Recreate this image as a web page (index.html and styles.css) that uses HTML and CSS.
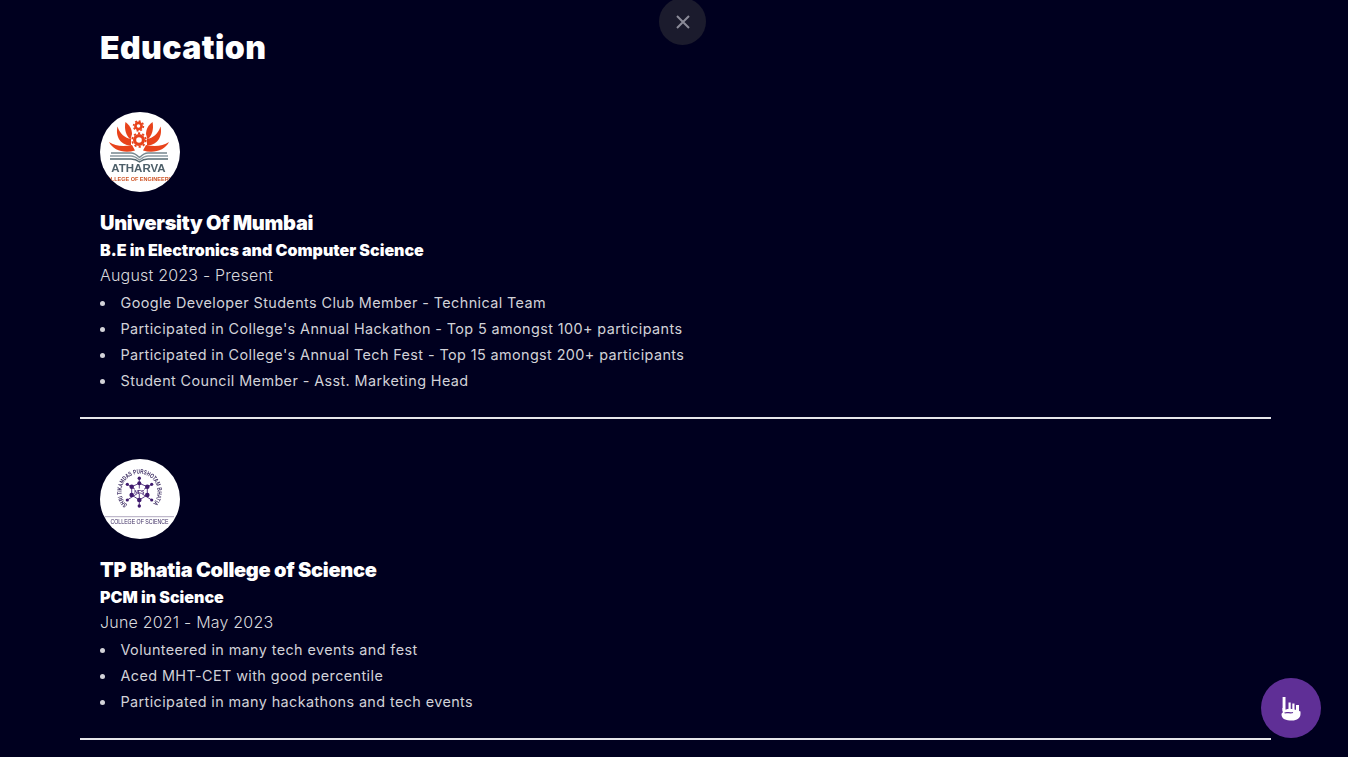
FILE: index.html
```html
<!DOCTYPE html>
<html lang="en">
<head>
<meta charset="utf-8">
<title>Education</title>
<link rel="stylesheet" href="styles.css">
</head>
<body>
<button class="close" aria-label="Close">
  <svg width="16" height="16" viewBox="0 0 16 16"><path d="M2 2L14 14M14 2L2 14" stroke="#8b8b98" stroke-width="2" fill="none"/></svg>
</button>
<main class="page">
  <h1 class="title">Education</h1>
  <section class="entry">
    <div class="logo">
      <svg width="80" height="80" viewBox="0 0 80 80">
        <g fill="#e8431b">
          <path d="M32 33C23 35 15 34 9 30C13 38 24 42 35 38.500Z"/>
          <path d="M46 33C55 35 63 34 69 30C65 38 54 42 43 38.500Z"/>
          <path d="M31 27C25 26 20 22 17.500 14.500C15.500 23 19 33 31 33.500Z"/>
          <path d="M47 27C53 26 58 22 60.500 14.500C62.500 23 59 33 47 33.500Z"/>
          <path d="M32 22C32 17 29.500 13 25.500 10C24 17 26 24 30.500 27.500Z"/>
          <path d="M46 22C46 17 48.500 13 52.500 10C54 17 52 24 47.500 27.500Z"/>
        </g>
        <g fill="none" stroke="#e8431b">
          <circle cx="38.500" cy="14" r="3.100" stroke-width="2.600"/>
          <circle cx="38.500" cy="14" r="4.900" stroke-width="1.600" stroke-dasharray="1.900 1.900"/>
          <circle cx="39" cy="28" r="4.400" stroke-width="3.200"/>
          <circle cx="39" cy="28" r="6.800" stroke-width="1.800" stroke-dasharray="2.200 2.200"/>
        </g>
        <g fill="none" stroke="#75878f" stroke-width="1.300">
          <path d="M11 41H31C35 41 37 43 39.500 45.500C42 43 44 41 48 41H67"/>
          <path d="M10 44H31C35 44 37 46 39.500 48C42 46 44 44 48 44H68" stroke="#8c9ba2"/>
          <path d="M10 47H31C35 47 37 48 39.500 50C42 48 44 47 48 47H68" stroke="#566a72"/>
        </g>
        <text class="logo-a" x="38.500" y="60" text-anchor="middle">ATHARVA</text>
        <text class="logo-b" x="40.500" y="68.800" text-anchor="middle">COLLEGE OF ENGINEERING</text>
      </svg>
    </div>
    <h2 class="school">University Of Mumbai</h2>
    <h3 class="degree">B.E in Electronics and Computer Science</h3>
    <p class="dates">August 2023 - Present</p>
    <ul class="points">
      <li>Google Developer Students Club Member - Technical Team</li>
      <li>Participated in College's Annual Hackathon - Top 5 amongst 100+ participants</li>
      <li>Participated in College's Annual Tech Fest - Top 15 amongst 200+ participants</li>
      <li>Student Council Member - Asst. Marketing Head</li>
    </ul>
  </section>
  <section class="entry">
    <div class="logo">
      <svg width="80" height="80" viewBox="0 0 80 80">
        <defs><path id="arc" d="M27.400 46A18 18 0 1 1 51.600 46"/></defs>
        <text class="logo-c"><textPath href="#arc" textLength="84" lengthAdjust="spacingAndGlyphs">SHRI TIKAMDAS PURSHOTAM BHATIA</textPath></text>
        <g stroke="#4c2a78" stroke-width=".9" fill="none">
          <path d="M39.300 19V47M27.300 25.300L51.700 41M51.700 25.300L27.300 41"/>
          <path d="M39.300 24.300L47.300 27.700V36L39.300 41L31.700 36V27.700Z"/>
        </g>
        <g fill="#3f1a6e">
          <circle cx="39.300" cy="19.300" r="1.700"/><circle cx="39.300" cy="24.300" r="2"/><circle cx="39.300" cy="41" r="2.300"/><circle cx="39.300" cy="47" r="1.700"/>
          <circle cx="31.700" cy="27.700" r="2.300"/><circle cx="47.300" cy="27.700" r="2.300"/><circle cx="31.700" cy="36" r="2.300"/><circle cx="47.300" cy="36" r="2.300"/>
          <circle cx="27.300" cy="25.300" r="1.600"/><circle cx="51.700" cy="25.300" r="1.600"/><circle cx="27.300" cy="41" r="1.600"/><circle cx="51.700" cy="41" r="1.600"/>
        </g>
        <rect x="35" y="29.500" width="9" height="5.500" fill="#fff"/>
        <text class="logo-d" x="39.300" y="34.500" text-anchor="middle">NES</text>
        <path d="M5 57.700H74" stroke="#9c90ae" stroke-width=".8"/>
        <text class="logo-e" x="39.500" y="65" text-anchor="middle" textLength="58" lengthAdjust="spacingAndGlyphs">COLLEGE OF SCIENCE</text>
      </svg>
    </div>
    <h2 class="school">TP Bhatia College of Science</h2>
    <h3 class="degree">PCM in Science</h3>
    <p class="dates">June 2021 - May 2023</p>
    <ul class="points">
      <li>Volunteered in many tech events and fest</li>
      <li>Aced MHT-CET with good percentile</li>
      <li>Participated in many hackathons and tech events</li>
    </ul>
  </section>
</main>
<button class="fab" aria-label="Pointer">
  <svg width="20" height="24" viewBox="0 0 20 24" fill="#fff">
    <path d="M1.600 0H4.500V12H1.600Z"/>
    <path d="M7.500 5.500H9.700V12H7.500Z"/>
    <path d="M11.300 6.500H13.500V13H11.300Z"/>
    <path d="M15 8H18V15H15Z"/>
    <path d="M1.500 11L5 12.500C8 11 13 12 19.500 14.500V17C19.500 21 16 23.500 11 23.500C5 23.500 .5 22 .5 17.500C.5 16.500 1 15.700 2 15.200C1.300 14 1.100 12.500 1.500 11Z"/>
    <path d="M3.500 16C6 14.800 9 16.500 12 15.500" stroke="#5f2f96" stroke-width="1.300" fill="none"/>
  </svg>
</button>
</body>
</html>
```
FILE: styles.css
```css
* { box-sizing: border-box; }
html, body { height: 100%; }
body {
  margin: 0;
  height: 757px;
  overflow: hidden;
  background: #00001f;
  color: #fff;
  font-family: "Inter", "Open Sans", sans-serif;
}
.page {
  padding: 25px 77px 0 80px;
}
.title {
  margin: 0 0 41px;
  padding-left: 20px;
  font-size: 32px;
  line-height: 46px;
  font-weight: 900;
  letter-spacing: 0.4px;
}
.entry {
  padding: 0 20px 23px;
  border-bottom: 2px solid #e6e6ea;
  margin-bottom: 40px;
}
.logo {
  width: 80px;
  height: 80px;
  border-radius: 50%;
  overflow: hidden;
  background: #fff;
  margin-bottom: 18px;
}
.logo svg { display: block; filter: blur(0.35px); }
.logo-a { font: 700 11.500px "Liberation Sans", sans-serif; fill: #4d5f69; }
.logo-b { font: 700 5.500px "Liberation Sans", sans-serif; fill: #cf5526; }
.logo-c { font: 700 6.400px "Liberation Sans", sans-serif; fill: #3a2a60; }
.logo-d { font: 700 5px "Liberation Sans", sans-serif; fill: #3f1a6e; }
.logo-e { font: 400 6.500px "Liberation Sans", sans-serif; fill: #3a2a60; }
.school {
  margin: 0 0 1px;
  font-size: 20px;
  line-height: 26px;
  font-weight: 900;
  letter-spacing: -0.3px;
}
.degree {
  margin: 0 0 1px;
  font-size: 16px;
  line-height: 26px;
  font-weight: 900;
  letter-spacing: 0;
}
.dates {
  margin: 0;
  font-size: 16px;
  line-height: 22px;
  font-weight: 300;
  color: #d8d8dc;
  letter-spacing: 0.2px;
}
.points {
  list-style: none;
  margin: 4px 0 0;
  padding: 0;
  font-size: 14.400px;
  line-height: 26px;
  letter-spacing: 0.4px;
  color: #d2d2d8;
}
.points li {
  display: flex;
  align-items: center;
  gap: 15.500px;
}
.points li::before {
  content: "";
  width: 5px;
  height: 5px;
  border-radius: 50%;
  background: #d2d2d8;
}
.close {
  position: fixed;
  top: -2px;
  left: 659px;
  width: 47px;
  height: 47px;
  border: 0;
  padding: 0;
  border-radius: 50%;
  background: #1b1b2d;
  display: flex;
  align-items: center;
  justify-content: center;
}
.fab {
  position: fixed;
  left: 1261px;
  top: 678px;
  width: 60px;
  height: 60px;
  border: 0;
  padding: 1px 0 0;
  border-radius: 50%;
  background: #5f2f96;
  display: flex;
  align-items: center;
  justify-content: center;
}
```
